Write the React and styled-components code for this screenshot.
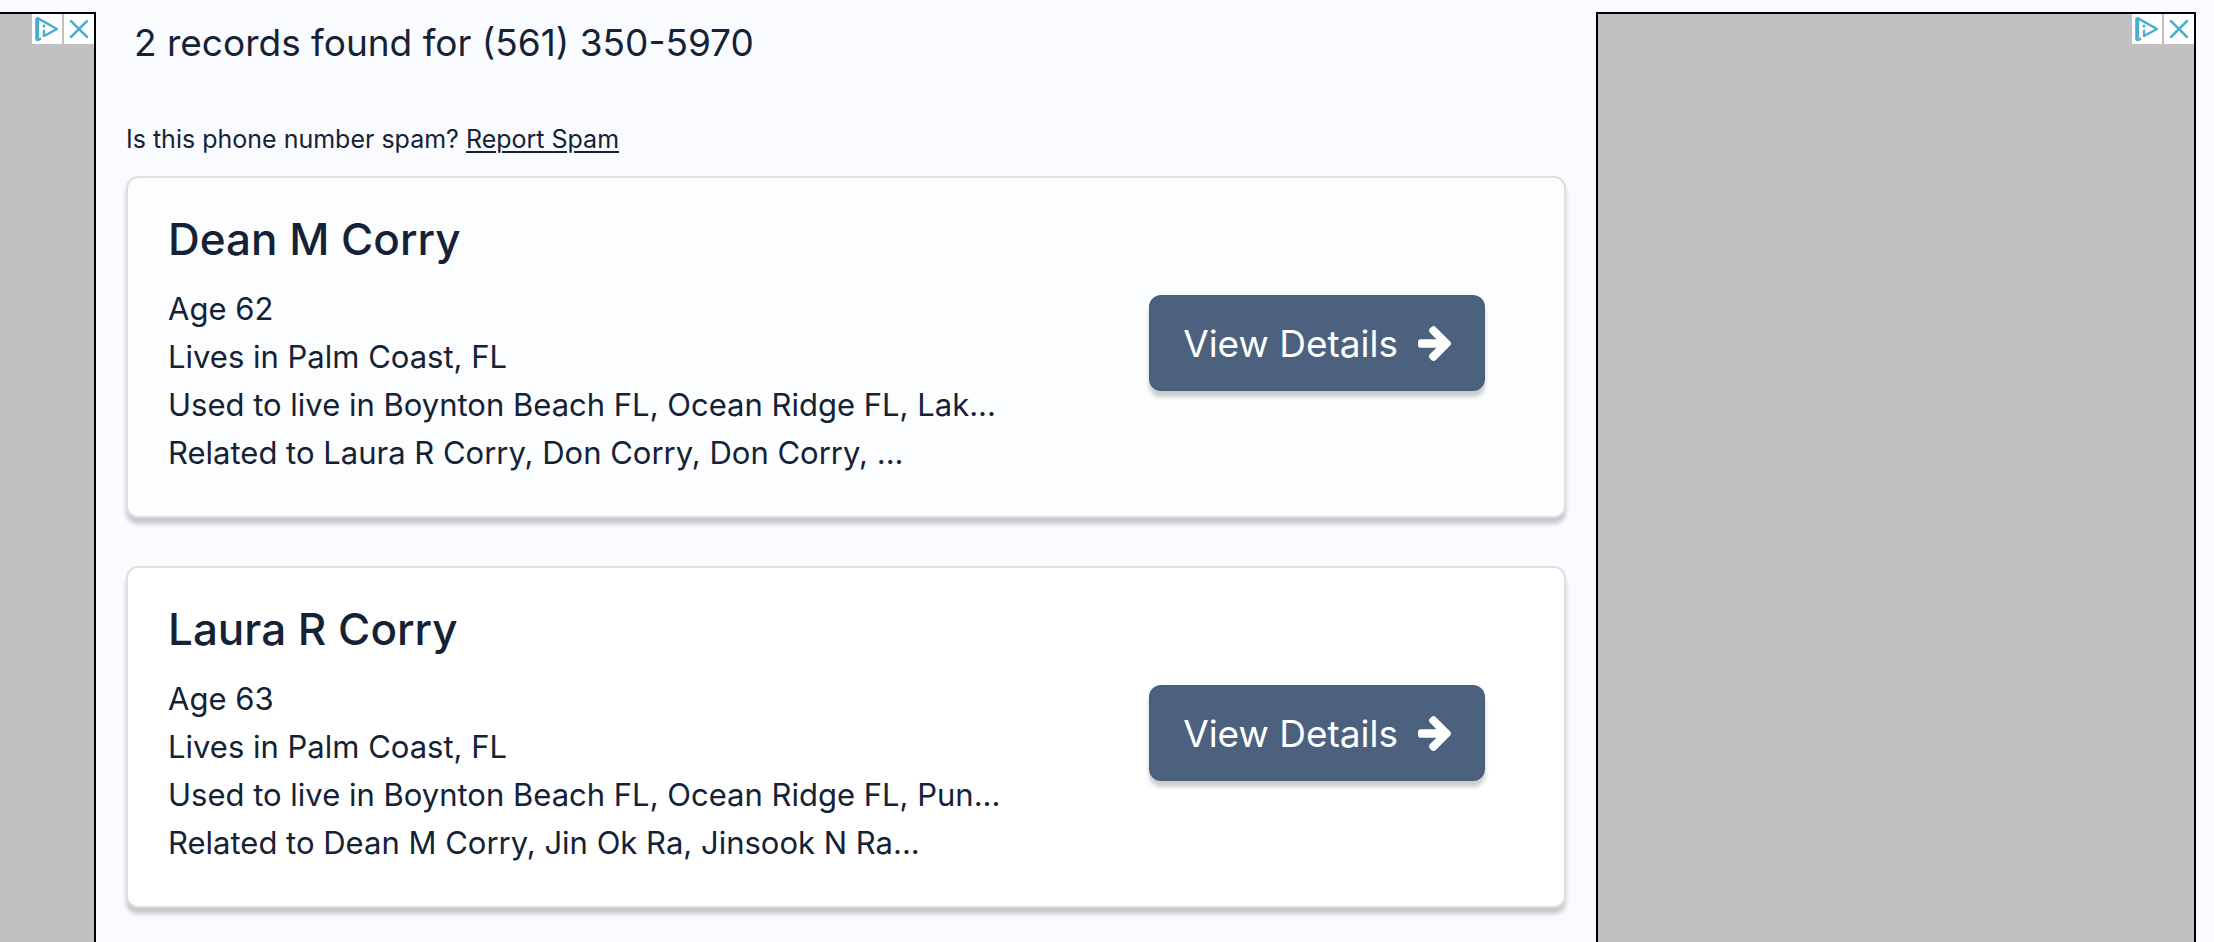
import React from 'react';
import styled, { createGlobalStyle } from 'styled-components';

const GlobalStyle = createGlobalStyle`
  * {
    box-sizing: border-box;
  }

  body {
    margin: 0;
    background: #fafbff;
    color: #152235;
    font-family: Inter, sans-serif;
  }

  h1,
  h2,
  p {
    margin: 0;
    font-weight: 400;
  }
`;

const Page = styled.div`
  display: grid;
  grid-template-columns: 96px minmax(0, 1fr) 600px;
  column-gap: 30px;
  height: 100vh;
  padding-right: 18px;
  overflow: hidden;
`;

const AdSlot = styled.aside`
  display: flex;
  justify-content: flex-end;
  align-items: flex-start;
  gap: 2px;
  margin-top: 12px;
  background: #c3c0c1;
  border: 2px solid #000;
  border-bottom: none;
  border-left-width: ${(props) => (props.$cut ? '0' : '2px')};
`;

const AdButton = styled.button`
  display: flex;
  width: 30px;
  height: 30px;
  padding: 0;
  border: none;
  background: #fff;
  cursor: pointer;
`;

const Main = styled.main`
  display: flex;
  flex-direction: column;
`;

const Title = styled.h1`
  padding: 18px 8px 0;
  font-size: 37px;
  line-height: 50px;
`;

const SpamLine = styled.p`
  margin: 55px 0 21px;
  font-size: 25px;
  line-height: 32px;
`;

const SpamLink = styled.a`
  color: inherit;
  text-decoration: underline;
  text-decoration-thickness: 2px;
  text-underline-offset: 3px;
`;

const Results = styled.div`
  display: flex;
  flex-direction: column;
  gap: 48px;
`;

const Card = styled.article`
  display: flex;
  justify-content: space-between;
  align-items: center;
  padding: 31px 79px 39px 40px;
  background: ${(props) => (props.$active ? '#fcfdff' : '#fff')};
  border: 2px solid #dedfe0;
  border-radius: 12px;
  box-shadow: 0 6px 4px rgba(0, 0, 0, 0.2);
`;

const Info = styled.div`
  min-width: 0;
`;

const Name = styled.h2`
  margin-bottom: 16px;
  font-size: 44px;
  font-weight: 500;
  line-height: 60px;
`;

const Detail = styled.p`
  font-size: 31px;
  line-height: 48px;
  white-space: nowrap;
`;

const DetailsButton = styled.button`
  display: flex;
  align-items: center;
  gap: 20px;
  flex: none;
  height: 96px;
  padding: 0 32px;
  border: 2px solid #46607d;
  border-radius: 12px;
  background: #4b617e;
  box-shadow: 0 6px 4px rgba(0, 0, 0, 0.2);
  color: #fff;
  font-family: inherit;
  font-size: 37px;
  cursor: pointer;
`;

const people = [
  {
    name: 'Dean M Corry',
    active: true,
    details: [
      'Age 62',
      'Lives in Palm Coast, FL',
      'Used to live in Boynton Beach FL, Ocean Ridge FL, Lak...',
      'Related to Laura R Corry, Don Corry, Don Corry, ...',
    ],
  },
  {
    name: 'Laura R Corry',
    active: false,
    details: [
      'Age 63',
      'Lives in Palm Coast, FL',
      'Used to live in Boynton Beach FL, Ocean Ridge FL, Pun...',
      'Related to Dean M Corry, Jin Ok Ra, Jinsook N Ra...',
    ],
  },
];

function ArrowIcon() {
  return (
    <svg width="33" height="35" viewBox="0 181 1472 1558" fill="currentColor" aria-hidden="true">
      <path d="M1472 960q0 54-37 91l-651 651q-39 37-91 37-51 0-90-37l-75-75q-38-38-38-91t38-91l293-293H117q-52 0-84.5-37.5T0 1024V896q0-53 32.5-90.5T117 768h704L528 474q-38-36-38-90t38-90l75-75q38-38 90-38 53 0 91 38l651 651q37 35 37 90z" />
    </svg>
  );
}

function Ad({ cut }) {
  return (
    <AdSlot $cut={cut}>
      <AdButton aria-label="About this ad">
        <svg width="30" height="30" viewBox="0 0 30 30" fill="none" stroke="#4aaccf" strokeWidth="2.4" strokeLinejoin="round">
          <path d="M9 24.4 6 26 Q4.4 26.2 4.4 24.5 V5.5 Q4.4 3.8 6 4.4 L25 15 L12 22 V15.8" />
          <path d="M5.6 5.5v19" strokeWidth="3" />
          <circle cx="12" cy="12" r="1.5" fill="#4aaccf" stroke="none" />
        </svg>
      </AdButton>
      <AdButton aria-label="Close ad">
        <svg width="30" height="30" viewBox="0 0 30 30" fill="none" stroke="#4aaccf" strokeWidth="2.6">
          <path d="M6.3 6.3l17.4 17.4M23.7 6.3L6.3 23.7" />
        </svg>
      </AdButton>
    </AdSlot>
  );
}

function PersonCard({ person }) {
  return (
    <Card $active={person.active}>
      <Info>
        <Name>{person.name}</Name>
        {person.details.map((line) => (
          <Detail key={line}>{line}</Detail>
        ))}
      </Info>
      <DetailsButton>
        View Details
        <ArrowIcon />
      </DetailsButton>
    </Card>
  );
}

function App() {
  return (
    <>
      <GlobalStyle />
      <Page>
        <Ad cut />
        <Main>
          <Title>2 records found for (561) 350-5970</Title>
          <SpamLine>
            Is this phone number spam? <SpamLink href="#report">Report Spam</SpamLink>
          </SpamLine>
          <Results>
            {people.map((person) => (
              <PersonCard key={person.name} person={person} />
            ))}
          </Results>
        </Main>
        <Ad />
      </Page>
    </>
  );
}

export default App;
